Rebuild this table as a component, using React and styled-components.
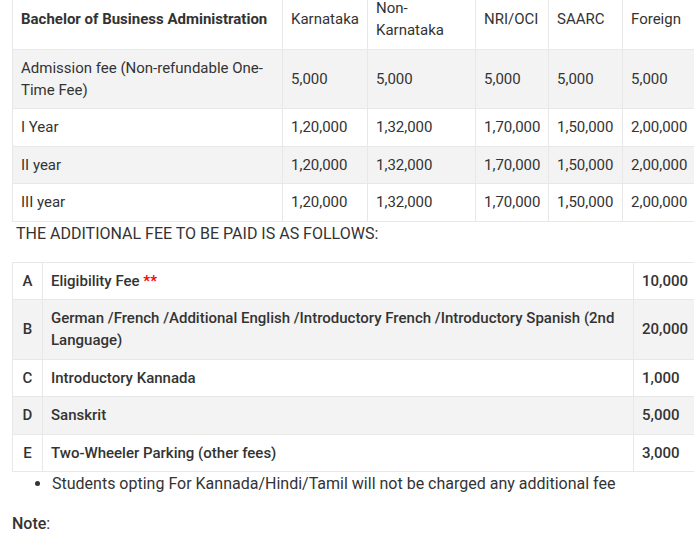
import React from 'react';
import styled, { createGlobalStyle } from 'styled-components';

const GlobalStyle = createGlobalStyle`
    body {
        margin: 0;
        background: #fff;
        color: #333;
        font-family: Roboto, "Liberation Sans", sans-serif;
        overflow: hidden;
    }
`;

const tuition = [
    { label: 'Admission fee (Non-refundable One-Time Fee)', fees: ['5,000', '5,000', '5,000', '5,000', '5,000'] },
    { label: 'I Year', fees: ['1,20,000', '1,32,000', '1,70,000', '1,50,000', '2,00,000'] },
    { label: 'II year', fees: ['1,20,000', '1,32,000', '1,70,000', '1,50,000', '2,00,000'] },
    { label: 'III year', fees: ['1,20,000', '1,32,000', '1,70,000', '1,50,000', '2,00,000'] },
];

const categories = ['Karnataka', 'Non-Karnataka', 'NRI/OCI', 'SAARC', 'Foreign'];
const widths = [270, 85, 108, 73, 74, 74];

const extras = [
    { key: 'A', label: 'Eligibility Fee', star: true, fee: '10,000' },
    { key: 'B', label: 'German /French /Additional English /Introductory French /Introductory Spanish (2nd Language)', fee: '20,000' },
    { key: 'C', label: 'Introductory Kannada', fee: '1,000' },
    { key: 'D', label: 'Sanskrit', fee: '5,000' },
    { key: 'E', label: 'Two-Wheeler Parking (other fees)', fee: '3,000' },
];

export default function App() {
    return (
        <Page>
            <GlobalStyle />
            <FeeTable width={684}>
                <colgroup>
                    {widths.map((w, i) => <col key={i} style={{ width: w }} />)}
                </colgroup>
                <tbody>
                    <Row>
                        <Cell head>Bachelor of Business Administration</Cell>
                        {categories.map(c => <Cell key={c}>{c}</Cell>)}
                    </Row>
                    {tuition.map(row => (
                        <Row key={row.label}>
                            <Cell>{row.label}</Cell>
                            {row.fees.map((f, i) => <Cell key={i}>{f}</Cell>)}
                        </Row>
                    ))}
                </tbody>
            </FeeTable>
            <Heading>THE ADDITIONAL FEE TO BE PAID IS AS FOLLOWS:</Heading>
            <FeeTable width={683} medium>
                <colgroup>
                    <col style={{ width: 30 }} />
                    <col style={{ width: 591 }} />
                    <col style={{ width: 62 }} />
                </colgroup>
                <tbody>
                    {extras.map(item => (
                        <Row key={item.key}>
                            <KeyCell>{item.key}</KeyCell>
                            <Cell>
                                {item.label}
                                {item.star && <Star> **</Star>}
                            </Cell>
                            <Cell>{item.fee}</Cell>
                        </Row>
                    ))}
                </tbody>
            </FeeTable>
            <Bullets>
                <li>Students opting For Kannada/Hindi/Tamil will not be charged any additional fee</li>
            </Bullets>
            <Note>
                <strong>Note</strong>:
            </Note>
        </Page>
    );
}

const Page = styled.div`
    padding-left: 12px;
    margin-top: -11px;
`;

const FeeTable = styled.table`
    width: ${p => p.width}px;
    table-layout: fixed;
    border-collapse: collapse;
    font-size: 15px;
    line-height: 22px;
    font-weight: ${p => (p.medium ? 500 : 400)};
    color: #333;
`;

const Row = styled.tr`
    &:nth-child(even) {
        background: #f3f3f3;
    }
`;

const Cell = styled.td`
    padding: 7.25px 8px;
    border: 1px solid #e8e8e8;
    vertical-align: middle;
    font-weight: ${p => (p.head ? 700 : 'inherit')};
`;

const KeyCell = styled(Cell)`
    text-align: center;
    padding: 7.25px 4px;
`;

const Star = styled.span`
    color: #ff0000;
    font-weight: 700;
`;

const Heading = styled.p`
    margin: 0 0 16px 4px;
    font-size: 16px;
    line-height: 24px;
`;

const Bullets = styled.ul`
    margin: 0;
    padding-left: 40px;
    font-size: 16px;
    line-height: 24px;
`;

const Note = styled.p`
    margin: 16px 0 0;
    font-size: 16px;
    line-height: 24px;

    strong {
        font-weight: 500;
    }
`;
